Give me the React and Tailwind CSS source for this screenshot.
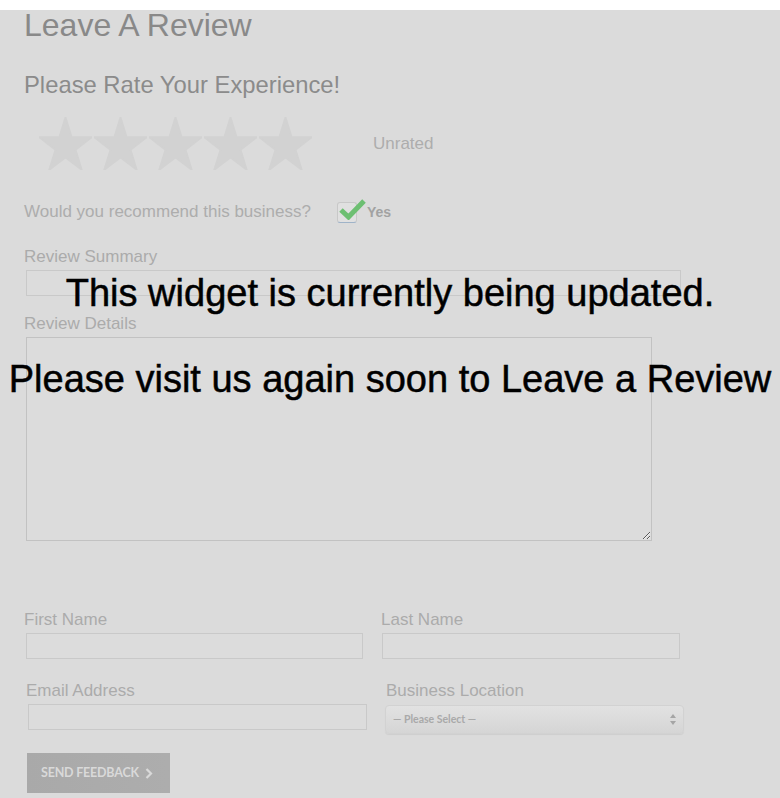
import React from "react";

const STAR_POINTS =
  "50,0 61.23,34.55 97.55,34.55 68.16,55.9 79.39,90.45 50,69.1 20.61,90.45 31.84,55.9 2.45,34.55 38.77,34.55";

const Star = () => (
  <svg
    width="53"
    height="53"
    viewBox="2.45 0 95.1 90.45"
    preserveAspectRatio="none"
    className="shrink-0"
  >
    <polygon points={STAR_POINTS} fill="#d2d2d2" strokeLinejoin="round" stroke="#d2d2d2" strokeWidth="3" />
  </svg>
);

const Label = ({ children, className = "" }) => (
  <div className={`text-[17px] leading-[20px] text-[#ababab] ${className}`}>{children}</div>
);

const Field = ({ className = "" }) => (
  <div className={`h-[26px] border border-[#c9c9c9] bg-[#dcdcdc] ${className}`}></div>
);

const ReviewPage = () => {
  return (
    <div
      className="relative min-h-screen bg-[#dbdbdb]"
      style={{ fontFamily: '"Liberation Sans", Arial, sans-serif' }}
    >
      <div className="h-[10px] bg-white"></div>

      <div className="px-6">
        <h1 className="text-[32px] leading-[30px] text-[#898989]">Leave A Review</h1>
        <h2 className="mt-[30px] text-[23.8px] leading-[30px] text-[#8b8b8b]">
          Please Rate Your Experience!
        </h2>

        {/* stars */}
        <div className="mt-[17px] flex items-center pl-[15px]">
          <div className="flex gap-[2px]">
            <Star />
            <Star />
            <Star />
            <Star />
            <Star />
          </div>
          <span className="ml-[61px] text-[17px] leading-[20px] text-[#adadad]">Unrated</span>
        </div>

        {/* recommend */}
        <div className="mt-[31px] flex h-[22px] items-center">
          <span className="w-[313px] text-[17px] leading-[20px] text-[#adadad]">
            Would you recommend this business?
          </span>
          <div className="relative h-[21px] w-[20px] rounded-[3px] border border-[#c8c8c8] border-b-[#9fb3c8] bg-[#e0e0e0]">
            <svg
              className="absolute left-[1px] top-[-5px]"
              width="27"
              height="22"
              viewBox="0 0 27 22"
            >
              <polyline
                points="2,12 9.5,19 25,3"
                fill="none"
                stroke="#6dbf72"
                strokeWidth="5"
              />
            </svg>
          </div>
          <span className="ml-[10px] text-[14px] font-bold leading-[20px] text-[#a2a2a2]">Yes</span>
        </div>

        {/* summary */}
        <Label className="mt-[24px]">Review Summary</Label>
        <Field className="ml-[2px] mt-[3px] w-[655px]" />

        {/* details */}
        <Label className="mt-[18px]">Review Details</Label>
        <textarea className="ml-[2px] mt-[3px] block h-[204px] w-[626px] border border-[#c2c2c2] bg-[#dcdcdc] outline-none"></textarea>

        {/* names */}
        <div className="mt-[69px] flex">
          <div className="w-[357px]">
            <Label>First Name</Label>
            <Field className="ml-[2px] mt-[3px] w-[337px]" />
          </div>
          <div>
            <Label>Last Name</Label>
            <Field className="ml-[1px] mt-[3px] w-[298px]" />
          </div>
        </div>

        {/* email + location */}
        <div className="mt-[22px] flex">
          <div className="w-[357px] pl-[2px]">
            <Label>Email Address</Label>
            <Field className="ml-[2px] mt-[3px] w-[339px]" />
          </div>
          <div className="pl-[4px]">
            <Label className="pl-[1px]">Business Location</Label>
            <div className="mt-[4px] flex h-[29px] w-[299px] items-center justify-between rounded-[4px] border border-[#d2d2d2] bg-gradient-to-b from-[#e2e2e2] to-[#d5d5d5] pl-[7px] pr-[7px] shadow-[0_1px_1px_rgba(0,0,0,0.06)]">
              <span
                className="text-[10.5px] font-bold text-[#a9a9a9]"
                style={{ fontFamily: "Lato, sans-serif" }}
              >
                — Please Select —
              </span>
              <svg width="6" height="11" viewBox="0 0 6 11">
                <polygon points="3,0 6,4 0,4" fill="#a5a5a5" />
                <polygon points="0,7 6,7 3,11" fill="#a5a5a5" />
              </svg>
            </div>
          </div>
        </div>

        {/* button */}
        <button
          className="ml-[3px] mt-[19px] flex h-[40px] w-[143px] items-center bg-gradient-to-r from-[#a9a9a9] to-[#adadad] pl-[14px]"
          style={{ fontFamily: "Lato, sans-serif" }}
        >
          <span className="text-[12.5px] font-bold tracking-[-0.2px] text-[#d9d9d9]">SEND FEEDBACK</span>
          <svg className="ml-[6px]" width="8" height="11" viewBox="0 0 8 11">
            <polyline points="1.5,1 6,5.5 1.5,10" fill="none" stroke="#d9d9d9" strokeWidth="2.2" />
          </svg>
        </button>
      </div>

      {/* overlay notice */}
      <div className="absolute left-0 right-0 top-[271px] flex flex-col items-center gap-[42px] text-center text-[38px] leading-[44px] text-black [-webkit-text-stroke:0.5px_black]">
        <p>This widget is currently being updated.</p>
        <p>Please visit us again soon to Leave a Review</p>
      </div>
    </div>
  );
};

export default ReviewPage;
